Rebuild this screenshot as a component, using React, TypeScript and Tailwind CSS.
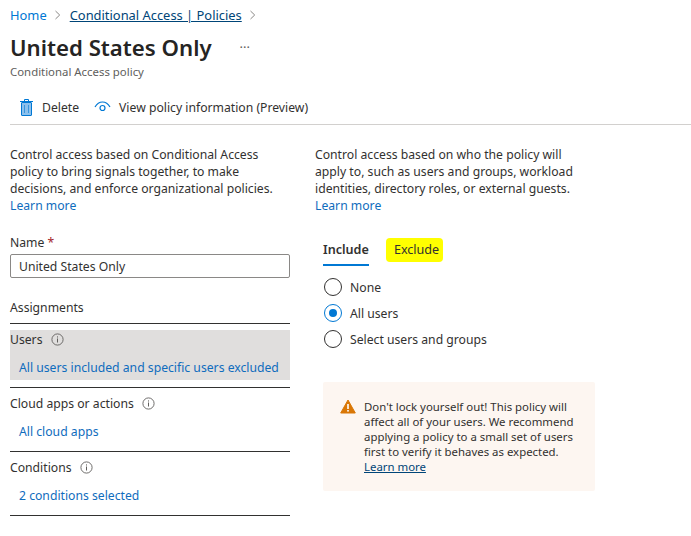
const link = 'text-[#0f6cbd]'

function InfoIcon() {
  return (
    <svg width="13" height="13" viewBox="0 0 13 13" fill="none" className="text-[#605e5c]">
      <circle cx="6.5" cy="6.5" r="5.6" stroke="currentColor" strokeWidth="0.9" />
      <rect x="6" y="5.5" width="1" height="4" fill="currentColor" />
      <rect x="6" y="3.4" width="1" height="1.1" fill="currentColor" />
    </svg>
  )
}

function Chevron() {
  return (
    <svg width="8" height="10" viewBox="0 0 8 10" fill="none" className="text-[#8a8886]">
      <path d="M1.5 1l4.2 4-4.2 4" stroke="currentColor" strokeWidth="1" />
    </svg>
  )
}

function Radio({ label, checked }: { label: string; checked?: boolean }) {
  return (
    <div className="flex h-[26px] items-center gap-2">
      <span className={`flex size-[18px] items-center justify-center rounded-full border ${checked ? 'border-[#0078d4]' : 'border-[#323130]'}`}>
        {checked ? <span className="size-[8px] rounded-full bg-[#0078d4]" /> : null}
      </span>
      <span>{label}</span>
    </div>
  )
}

function Assignment({ title, value, active }: { title: string; value: string; active?: boolean }) {
  return (
    <div className="border-b border-[#323130] pt-[6px] pb-[7px]">
      <div className={`h-[50px] ${active ? 'bg-[#e0dedd]' : ''}`}>
        <div className="flex h-[19px] items-center gap-2">
          {title}
          <InfoIcon />
        </div>
        <div className={`mt-[10px] pl-[9px] ${link}`}>{value}</div>
      </div>
    </div>
  )
}

export default function App() {
  return (
    <div className="h-[536px] w-[691px] overflow-hidden bg-white text-[12.2px] leading-[17px] text-[#323130]" style={{ fontFamily: '"Noto Sans", sans-serif' }}>
      <nav className="flex h-[30px] items-center gap-[7.5px] pl-[10px] text-[12.9px]">
        <span className="text-[#0078d4]">Home</span>
        <Chevron />
        <span className="text-[#004578] underline">Conditional Access | Policies</span>
        <Chevron />
      </nav>

      <div className="flex h-[36px] items-center pb-[2px] pl-[10px]">
        <h1 className="text-[22.2px] font-semibold text-[#252423]">United States Only</h1>
        <span className="ml-[28px] text-[13px] text-[#605e5c]">···</span>
      </div>
      <div className="-mt-[1px] pl-[10px] text-[11.4px] leading-[14px] text-[#605e5c]">Conditional Access policy</div>

      <div className="mt-[5px] ml-[10px] flex h-[41px] items-center gap-[15px] border-b border-[#d2d0ce] pt-[6px] pl-[10px]">
        <div className="flex items-center gap-[9px]">
          <svg width="13" height="17" viewBox="0 0 13 17" fill="none">
            <rect x="1.500" y="3.500" width="10" height="13" rx="0.500" fill="#8cc0ec" stroke="#0078d4" />
            <path d="M0 2.500h13M4.500 2V.5h4V2" stroke="#0078d4" />
            <path d="M4.500 6v8M8.500 6v8" stroke="#0078d4" strokeWidth="0.600" />
          </svg>
          Delete
        </div>
        <div className="flex items-center gap-[8px]">
          <svg width="17" height="12" viewBox="0 0 17 12" fill="none" className="text-[#0078d4]">
            <path d="M1 6C3 2.500 5.500 1 8.500 1s5.500 1.500 7.500 5" stroke="currentColor" strokeWidth="1.200" />
            <circle cx="8.500" cy="7" r="2.500" stroke="currentColor" strokeWidth="1.200" />
          </svg>
          View policy information (Preview)
        </div>
      </div>

      <div className="flex gap-[25px] px-[10px] pt-[21px]">
        <section className="w-[280px]">
          <p>
            Control access based on Conditional Access policy to bring signals together, to make decisions, and enforce organizational policies.
            <br />
            <span className={link}>Learn more</span>
          </p>

          <div className="mt-[20px]">
            Name <span className="text-[#a4262c]">*</span>
          </div>
          <div className="mt-[3px] flex h-[24px] items-center rounded-[2px] border border-[#8a8886] pl-[8px]">United States Only</div>

          <div className="mt-[21px] border-b border-[#323130] pb-[7px]">Assignments</div>
          <Assignment title="Users" value="All users included and specific users excluded" active />
          <Assignment title="Cloud apps or actions" value="All cloud apps" />
          <Assignment title="Conditions" value="2 conditions selected" />
        </section>

        <section className="w-[280px]">
          <p>
            Control access based on who the policy will apply to, such as users and groups, workload identities, directory roles, or external guests.
            <br />
            <span className={link}>Learn more</span>
          </p>

          <div className="mt-[27px] ml-[8px] flex items-start gap-[17px] text-[12.6px]">
            <div className="border-b-2 border-[#0078d4] pb-[6px] font-semibold">Include</div>
            <div className="-mt-[3px] rounded-[4px] bg-[#ffff00] pt-[3px] pr-[4px] pb-[4px] pl-[8px]">Exclude</div>
          </div>

          <div className="mt-[8px] ml-[9px]">
            <Radio label="None" />
            <Radio label="All users" checked />
            <Radio label="Select users and groups" />
          </div>

          <div className="mt-[30px] ml-[8px] flex h-[109px] w-[272px] gap-[8px] rounded-[2px] bg-[#fdf6f1] pt-[17px] pl-[17px]">
            <svg width="16" height="15" viewBox="0 0 16 15" className="shrink-0">
              <path d="M8 1L15.300 14H.7z" fill="#d97706" stroke="#d97706" strokeLinejoin="round" />
              <rect x="7.200" y="5" width="1.600" height="5" fill="#fff" />
              <rect x="7.200" y="11" width="1.600" height="1.600" fill="#fff" />
            </svg>
            <p className="w-[215px] text-[11.4px] leading-[15px]">
              Don't lock yourself out! This policy will affect all of your users. We recommend applying a policy to a small set of users first to verify it behaves as expected.
              <br />
              <span className="text-[#004578] underline">Learn more</span>
            </p>
          </div>
        </section>
      </div>
    </div>
  )
}
